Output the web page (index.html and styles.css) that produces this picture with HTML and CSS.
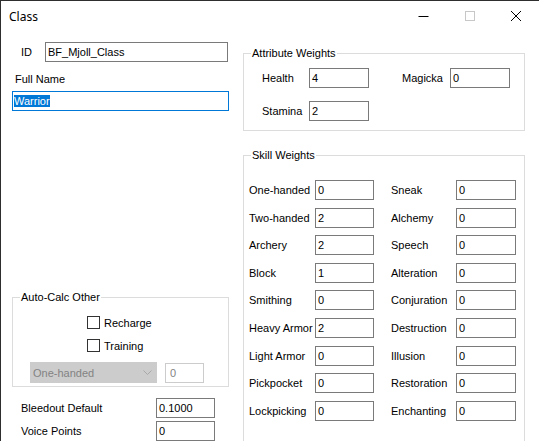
FILE: index.html
```html
<!DOCTYPE html>
<html lang="en">

<head>
    <meta charset="UTF-8">
    <title>Class</title>
    <link rel="stylesheet" href="styles.css">
</head>

<body>
    <div class="window">
        <div class="titlebar">
            <span class="title">Class</span>
            <div class="caption-buttons">
                <span class="cap-btn">
                    <svg width="12" height="12" viewBox="0 0 12 12"><path d="M0.5 6.5h10" stroke="#000" stroke-width="1" /></svg>
                </span>
                <span class="cap-btn">
                    <svg width="12" height="12" viewBox="0 0 12 12"><rect x="1.5" y="1.5" width="9" height="9" fill="none" stroke="#c8c8c8" stroke-width="1" /></svg>
                </span>
                <span class="cap-btn">
                    <svg width="12" height="12" viewBox="0 0 12 12"><path d="M1 1L11 11M11 1L1 11" stroke="#000" stroke-width="1" /></svg>
                </span>
            </div>
        </div>

        <div class="dialog">
            <div class="left-col">
                <div class="id-row">
                    <label class="id-label">ID</label>
                    <div class="field id-field">BF_Mjoll_Class</div>
                </div>
                <label class="name-label">Full Name</label>
                <div class="field name-field focused"><span class="selected">Warrior</span></div>

                <fieldset class="group autocalc">
                    <legend>Auto-Calc Other</legend>
                    <div class="autocalc-body">
                        <div class="check-row"><span class="checkbox"></span>Recharge</div>
                        <div class="check-row"><span class="checkbox"></span>Training</div>
                        <div class="train-row">
                            <div class="combo disabled">
                                <span>One-handed</span>
                                <svg width="9" height="6" viewBox="0 0 9 6"><path d="M0.5 0.5L4.5 4.5L8.5 0.5" fill="none" stroke="#a8a8a8" stroke-width="1" /></svg>
                            </div>
                            <div class="field small-field disabled">0</div>
                        </div>
                    </div>
                </fieldset>

                <div class="misc-row bleedout">
                    <label>Bleedout Default</label>
                    <div class="field misc-field">0.1000</div>
                </div>
                <div class="misc-row">
                    <label>Voice Points</label>
                    <div class="field misc-field">0</div>
                </div>
            </div>

            <div class="right-col">
                <fieldset class="group attributes">
                    <legend>Attribute Weights</legend>
                    <div class="attr-grid">
                        <label>Health</label>
                        <div class="field">4</div>
                        <label>Magicka</label>
                        <div class="field">0</div>
                        <label>Stamina</label>
                        <div class="field">2</div>
                    </div>
                </fieldset>

                <fieldset class="group skills">
                    <legend>Skill Weights</legend>
                    <div class="skill-grid">
                        <label>One-handed</label><div class="field">0</div>
                        <label>Sneak</label><div class="field">0</div>
                        <label>Two-handed</label><div class="field">2</div>
                        <label>Alchemy</label><div class="field">0</div>
                        <label>Archery</label><div class="field">2</div>
                        <label>Speech</label><div class="field">0</div>
                        <label>Block</label><div class="field">1</div>
                        <label>Alteration</label><div class="field">0</div>
                        <label>Smithing</label><div class="field">0</div>
                        <label>Conjuration</label><div class="field">0</div>
                        <label>Heavy Armor</label><div class="field">2</div>
                        <label>Destruction</label><div class="field">0</div>
                        <label>Light Armor</label><div class="field">0</div>
                        <label>Illusion</label><div class="field">0</div>
                        <label>Pickpocket</label><div class="field">0</div>
                        <label>Restoration</label><div class="field">0</div>
                        <label>Lockpicking</label><div class="field">0</div>
                        <label>Enchanting</label><div class="field">0</div>
                    </div>
                </fieldset>
            </div>
        </div>
    </div>
</body>

</html>
```

FILE: styles.css
```css
body {
    margin: 0;
    background: #fff;
    font-family: "Liberation Sans", Arial, sans-serif;
    font-size: 11px;
    color: #000;
}

.window {
    width: 539px;
    height: 441px;
    box-sizing: border-box;
    border-top: 1px solid #2e2e2e;
    border-left: 1px solid #2e2e2e;
    overflow: hidden;
}

.titlebar {
    height: 30px;
    display: flex;
    align-items: center;
    justify-content: space-between;
}

.title {
    font-family: "Noto Sans", sans-serif;
    font-size: 12px;
    margin-left: 8px;
}

.caption-buttons {
    display: flex;
}

.cap-btn {
    width: 46px;
    height: 30px;
    display: flex;
    align-items: center;
    justify-content: center;
}

.dialog {
    display: grid;
    grid-template-columns: 217px 282px;
    column-gap: 14px;
    padding-left: 11px;
}

.field {
    box-sizing: border-box;
    height: 20px;
    border: 1px solid #7a7a7a;
    padding-left: 2px;
    line-height: 18px;
    background: #fff;
    white-space: nowrap;
}

.field.focused {
    border-color: #0078d7;
}

.field.disabled {
    border-color: #cccccc;
    color: #838383;
}

.selected {
    background: #0078d7;
    color: #fff;
}

/* left column */

.left-col {
    display: flex;
    flex-direction: column;
}

.id-row {
    display: flex;
    align-items: center;
    margin-top: 11px;
}

.id-label {
    width: 24px;
    padding-left: 9px;
}

.id-field {
    width: 183px;
}

.name-label {
    margin-top: 11px;
    padding-left: 3px;
    line-height: 13px;
}

.name-field {
    margin-top: 5px;
    width: 217px;
    padding-left: 1px;
}

.group {
    margin: 0;
    border: 1px solid #dcdcdc;
    padding: 0;
    min-width: 0;
}

.group legend {
    padding: 0 1px;
    margin-left: 7px;
    line-height: 13px;
}

.autocalc {
    margin-top: 180px;
}

.autocalc-body {
    padding: 12px 0 3px 17px;
}

.check-row {
    display: flex;
    align-items: center;
    height: 13px;
    margin-left: 57px;
    margin-bottom: 10px;
}

.checkbox {
    width: 13px;
    height: 13px;
    box-sizing: border-box;
    border: 1px solid #333;
    margin-right: 4px;
}

.train-row {
    display: flex;
    align-items: center;
    margin-top: 1px;
}

.combo {
    box-sizing: border-box;
    width: 127px;
    height: 21px;
    display: flex;
    align-items: center;
    justify-content: space-between;
    padding: 0 5px 0 3px;
}

.combo.disabled {
    background: #cccccc;
    color: #838383;
}

.small-field {
    width: 39px;
    margin-left: 8px;
    padding-left: 4px;
}

.misc-row {
    display: flex;
    align-items: center;
    margin-top: 3px;
}

.misc-row.bleedout {
    margin-top: 11px;
}

.misc-row label {
    width: 135px;
    padding-left: 9px;
}

.misc-field {
    width: 59px;
}

/* right column */

.attributes {
    margin-top: 16px;
}

.attr-grid {
    display: grid;
    grid-template-columns: 47px 60px 33px 48px 60px;
    grid-auto-rows: 20px;
    row-gap: 13px;
    align-items: center;
    padding: 8px 0 9px 18px;
}

.attr-grid label:nth-of-type(2) {
    grid-column: 4;
}

.attr-grid label:nth-of-type(3) {
    grid-column: 1;
}

.skills {
    margin-top: 18px;
}

.skill-grid {
    display: grid;
    grid-template-columns: 66px 59px 17px 65px 60px;
    grid-auto-rows: 20px;
    row-gap: 7.6px;
    align-items: center;
    padding: 18px 0 40px 5px;
}

.skill-grid label:nth-of-type(even) {
    grid-column: 4;
}

.skill-grid label:nth-of-type(odd) {
    grid-column: 1;
}
```
